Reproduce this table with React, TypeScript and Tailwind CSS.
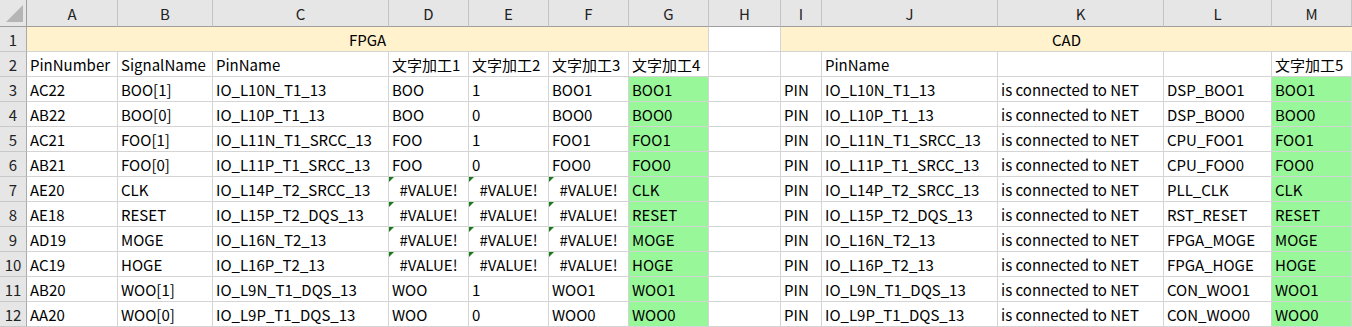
const cols = ['A', 'B', 'C', 'D', 'E', 'F', 'G', 'H', 'I', 'J', 'K', 'L', 'M'];

type Row = {
  pinNumber: string;
  signal: string;
  pinName: string;
  p1: string;
  p2: string;
  p3: string;
  p4: string;
  net: string;
};

const rows: Row[] = [
  { pinNumber: 'AC22', signal: 'BOO[1]', pinName: 'IO_L10N_T1_13', p1: 'BOO', p2: '1', p3: 'BOO1', p4: 'BOO1', net: 'DSP_BOO1' },
  { pinNumber: 'AB22', signal: 'BOO[0]', pinName: 'IO_L10P_T1_13', p1: 'BOO', p2: '0', p3: 'BOO0', p4: 'BOO0', net: 'DSP_BOO0' },
  { pinNumber: 'AC21', signal: 'FOO[1]', pinName: 'IO_L11N_T1_SRCC_13', p1: 'FOO', p2: '1', p3: 'FOO1', p4: 'FOO1', net: 'CPU_FOO1' },
  { pinNumber: 'AB21', signal: 'FOO[0]', pinName: 'IO_L11P_T1_SRCC_13', p1: 'FOO', p2: '0', p3: 'FOO0', p4: 'FOO0', net: 'CPU_FOO0' },
  { pinNumber: 'AE20', signal: 'CLK', pinName: 'IO_L14P_T2_SRCC_13', p1: '#VALUE!', p2: '#VALUE!', p3: '#VALUE!', p4: 'CLK', net: 'PLL_CLK' },
  { pinNumber: 'AE18', signal: 'RESET', pinName: 'IO_L15P_T2_DQS_13', p1: '#VALUE!', p2: '#VALUE!', p3: '#VALUE!', p4: 'RESET', net: 'RST_RESET' },
  { pinNumber: 'AD19', signal: 'MOGE', pinName: 'IO_L16N_T2_13', p1: '#VALUE!', p2: '#VALUE!', p3: '#VALUE!', p4: 'MOGE', net: 'FPGA_MOGE' },
  { pinNumber: 'AC19', signal: 'HOGE', pinName: 'IO_L16P_T2_13', p1: '#VALUE!', p2: '#VALUE!', p3: '#VALUE!', p4: 'HOGE', net: 'FPGA_HOGE' },
  { pinNumber: 'AB20', signal: 'WOO[1]', pinName: 'IO_L9N_T1_DQS_13', p1: 'WOO', p2: '1', p3: 'WOO1', p4: 'WOO1', net: 'CON_WOO1' },
  { pinNumber: 'AA20', signal: 'WOO[0]', pinName: 'IO_L9P_T1_DQS_13', p1: 'WOO', p2: '0', p3: 'WOO0', p4: 'WOO0', net: 'CON_WOO0' },
];

function Cell({ children, fill, err }: { children?: React.ReactNode; fill?: string; err?: boolean }) {
  if (err) {
    // error cells: centred text + green error marker in the corner
    return (
      <div className="relative flex items-center justify-center border-r border-b border-[#d4d4d4] bg-white whitespace-nowrap">
        <span className="absolute left-0 top-0 w-0 h-0 border-t-[5px] border-r-[5px] border-t-[#1a7a1a] border-r-transparent" />
        {children}
      </div>
    );
  }
  return (
    <div className={`flex items-center pl-[3px] border-r border-b border-[#d4d4d4] whitespace-nowrap overflow-hidden ${fill ?? 'bg-white'}`}>
      {children}
    </div>
  );
}

function RowHead({ n }: { n: number }) {
  return (
    <div className="flex items-center justify-center bg-[#e6e6e6] border-r border-r-[#ababab] border-b border-b-[#c8c8c8] text-[#222]">
      {n}
    </div>
  );
}

export default function App() {
  return (
    <div
      className="w-[1352px] h-[327px] overflow-hidden bg-white text-[15px] text-black"
      style={{ fontFamily: '"Noto Sans CJK JP", "Noto Sans", sans-serif' }}
    >
      <div className="grid grid-cols-[27px_91px_95px_176px_80px_80px_80px_80px_72px_41px_176px_166px_108px_80px] grid-rows-[27px_repeat(12,25px)] leading-none">
        {/* column headers */}
        <div className="relative bg-[#e6e6e6] border-r border-b border-[#9e9e9e]">
          <svg className="absolute left-[6px] top-[5px]" width="17" height="17" viewBox="0 0 17 17">
            <polygon points="17,0 17,17 0,17" fill="#b5b5b5" />
          </svg>
        </div>
        {cols.map((c) => (
          <div
            key={c}
            className="flex items-center justify-center bg-[#e6e6e6] border-r border-r-[#c3c3c3] border-b border-b-[#9e9e9e] text-[#222]"
          >
            {c}
          </div>
        ))}

        {/* row 1 */}
        <RowHead n={1} />
        <div className="col-span-7 flex items-center justify-center bg-[#fff2cc] border-r border-b border-[#d4d4d4]">FPGA</div>
        <Cell />
        <div className="col-span-5 flex items-center justify-center bg-[#fff2cc] border-b border-[#d4d4d4]">CAD</div>

        {/* row 2 */}
        <RowHead n={2} />
        <Cell>PinNumber</Cell>
        <Cell>SignalName</Cell>
        <Cell>PinName</Cell>
        <Cell>文字加工1</Cell>
        <Cell>文字加工2</Cell>
        <Cell>文字加工3</Cell>
        <Cell>文字加工4</Cell>
        <Cell />
        <Cell />
        <Cell>PinName</Cell>
        <Cell />
        <Cell />
        <Cell>文字加工5</Cell>

        {rows.map((r, i) => {
          const err = r.p1 === '#VALUE!';
          return [
            <RowHead key={`h${i}`} n={i + 3} />,
            <Cell key={`a${i}`}>{r.pinNumber}</Cell>,
            <Cell key={`b${i}`}>{r.signal}</Cell>,
            <Cell key={`c${i}`}>{r.pinName}</Cell>,
            <Cell key={`d${i}`} err={err}>{r.p1}</Cell>,
            <Cell key={`e${i}`} err={err}>{r.p2}</Cell>,
            <Cell key={`f${i}`} err={err}>{r.p3}</Cell>,
            <Cell key={`g${i}`} fill="bg-[#98f798]">{r.p4}</Cell>,
            <Cell key={`x${i}`} />,
            <Cell key={`i${i}`}>PIN</Cell>,
            <Cell key={`j${i}`}>{r.pinName}</Cell>,
            <Cell key={`k${i}`}>is connected to NET</Cell>,
            <Cell key={`l${i}`}>{r.net}</Cell>,
            <Cell key={`m${i}`} fill="bg-[#98f798]">{r.p4}</Cell>,
          ];
        })}
      </div>
    </div>
  );
}
